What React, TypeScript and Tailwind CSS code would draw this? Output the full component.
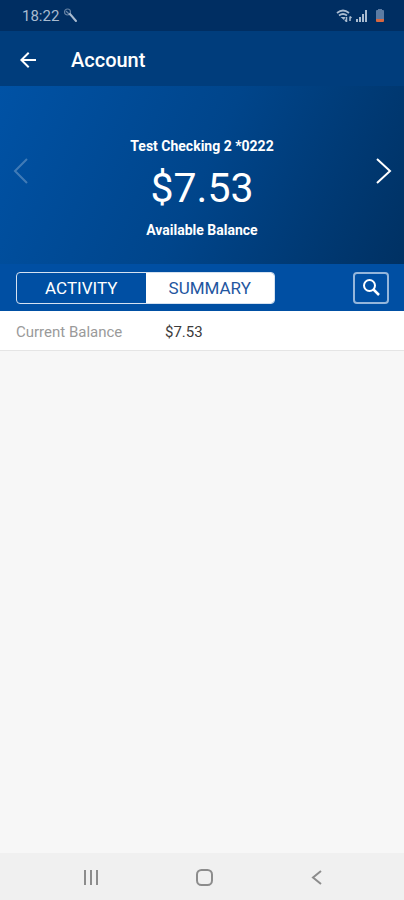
import { useState } from 'react';

const tabs = ['Activity', 'Summary'];

const details = [{ label: 'Current Balance', value: '$7.53' }];

function StatusBar() {
  return (
    <div className="flex h-[31px] items-center justify-between bg-[#002e62] pl-[22px] pr-5 text-[#a9bbd0]">
      <div className="flex items-center gap-1">
        <span className="text-[15px] leading-5">18:22</span>
        <svg className="h-4 w-4" viewBox="0 0 16 16" fill="none" stroke="currentColor">
          <circle cx="4.5" cy="4" r="3" strokeWidth="1.2" opacity="0.6" />
          <path d="M3 3l4 4" strokeWidth="1.2" opacity="0.6" />
          <path d="M7 6l6 7" strokeWidth="2" strokeLinecap="round" />
        </svg>
      </div>
      <div className="flex items-center">
        <svg className="h-4 w-4" viewBox="0 0 16 16" fill="none" stroke="currentColor" strokeWidth="1.8">
          <path d="M1 5q6-5 12 0" />
          <path d="M3 7.500q4-3 8 0" />
          <path d="M4.500 9h5L8 12z" fill="currentColor" stroke="none" />
          <path d="M10.500 9v5M9 12l1.500 1.500M14 13V8.500M15.500 10L14 8.500" strokeWidth="1.500" />
        </svg>
        <svg className="ml-1 h-3 w-3" viewBox="0 0 12 12" fill="currentColor">
          <path d="M0 9h2v3H0zM3 7h2v5H3zM6 4h2v8H6zM9 0h2v12H9z" />
        </svg>
        <svg className="ml-2 h-[13px] w-2" viewBox="0 0 8 13">
          <path d="M2 0h4v1h1q1 0 1 1v8H0V2q0-1 1-1h1z" fill="#5c7ba3" />
          <path d="M0 10h8v2q0 1-1 1H1q-1 0-1-1z" fill="#d9673f" />
        </svg>
      </div>
    </div>
  );
}

function Chevron({ direction }: { direction: 'left' | 'right' }) {
  return (
    <svg className="h-7 w-4" viewBox="0 0 16 28" fill="none" stroke="currentColor" strokeWidth="2">
      <path d={direction === 'left' ? 'M15 2L3 14l12 12' : 'M1 2l13 12L1 26'} />
    </svg>
  );
}

function NavigationBar() {
  return (
    <nav className="flex h-[47px] items-center justify-between bg-[#f0f0f0] pl-[79px] pr-[75px] text-[#8c8c8c]">
      <button type="button" aria-label="Recent apps">
        <svg className="h-6 w-6" viewBox="0 0 24 24" stroke="currentColor" strokeWidth="2">
          <path d="M6 5v15M12 5v15M18 5v15" />
        </svg>
      </button>
      <button type="button" aria-label="Home">
        <svg className="h-6 w-6" viewBox="0 0 24 24" fill="none" stroke="currentColor" strokeWidth="2">
          <rect x="5" y="5" width="15" height="15" rx="4.5" />
        </svg>
      </button>
      <button type="button" aria-label="Back">
        <svg className="h-6 w-6" viewBox="0 0 24 24" fill="none" stroke="currentColor" strokeWidth="2">
          <path d="M16 6l-8 6.500 8 6.500" />
        </svg>
      </button>
    </nav>
  );
}

export default function App() {
  const [active, setActive] = useState('Summary');

  return (
    <div className="flex min-h-screen flex-col bg-[#f7f7f7] font-[Roboto,sans-serif]">
      <StatusBar />

      <header className="flex h-[55px] items-center gap-[31px] bg-[#003d7c] px-4 pt-0.5 text-white">
        <button type="button" aria-label="Go back">
          <svg className="h-6 w-6" viewBox="0 0 24 24" fill="currentColor">
            <path d="M20 11H7.830l5.590-5.590L12 4l-8 8 8 8 1.410-1.410L7.830 13H20z" />
          </svg>
        </button>
        <h1 className="text-xl font-medium">Account</h1>
      </header>

      {/* Balance card */}
      <section className="flex h-[178px] items-center justify-between bg-linear-115 from-[#0052a5] via-[#00458b] to-[#003163] px-3 text-white">
        <button type="button" aria-label="Previous account" disabled className="mb-2 opacity-25">
          <Chevron direction="left" />
        </button>
        <div className="pt-[26px] text-center">
          <h2 className="text-sm font-bold">Test Checking 2 *0222</h2>
          <p className="pt-1 pb-1 text-[41px] leading-[56px]">$7.53</p>
          <p className="text-sm font-bold">Available Balance</p>
        </div>
        <button type="button" aria-label="Next account" className="mb-2">
          <Chevron direction="right" />
        </button>
      </section>

      {/* View switcher */}
      <div className="flex h-[47px] items-center justify-between bg-[#004fa3] pl-4 pr-[15px]">
        <div role="tablist" className="flex h-8 w-[259px] overflow-hidden rounded border border-[#d5e2f1]">
          {tabs.map((tab) => (
            <button
              key={tab}
              type="button"
              role="tab"
              aria-selected={active === tab}
              onClick={() => setActive(tab)}
              className={`flex-1 pt-0.5 text-[17px] uppercase ${active === tab ? 'bg-white text-[#23569f]' : 'text-white'}`}
            >
              {tab}
            </button>
          ))}
        </div>
        <button
          type="button"
          aria-label="Search"
          className="flex h-8 w-9 items-center justify-center rounded border-2 border-[#94b6db] text-white"
        >
          <svg className="h-6 w-6" viewBox="0 0 24 24" fill="none" stroke="currentColor" strokeWidth="2">
            <circle cx="10.5" cy="9.5" r="5.5" />
            <path d="M14.500 13.500l5.500 5.500" strokeWidth="2.500" />
          </svg>
        </button>
      </div>

      <main className="flex-1">
        <dl className="bg-white">
          {details.map((item) => (
            <div key={item.label} className="flex h-10 items-center border-b border-[#e5e5e5] px-4 pt-1 text-[15px]">
              <dt className="w-[149px] text-[#9a9a9a]">{item.label}</dt>
              <dd className="text-[#3c3c3c]">{item.value}</dd>
            </div>
          ))}
        </dl>
      </main>

      <NavigationBar />
    </div>
  );
}
